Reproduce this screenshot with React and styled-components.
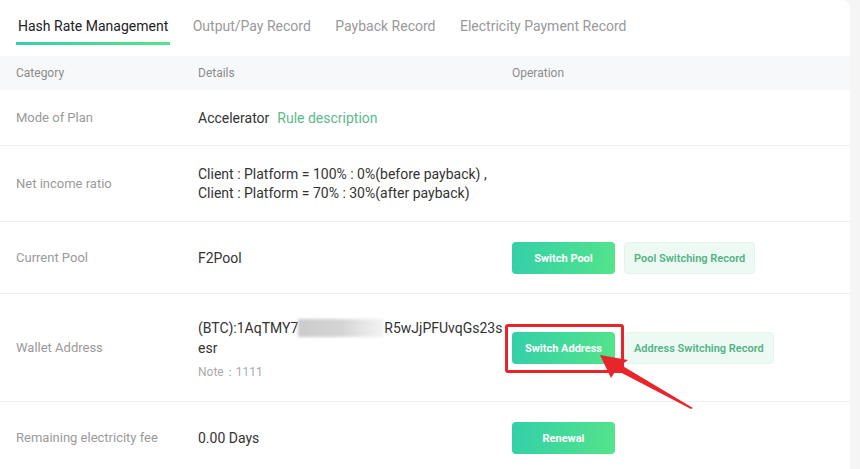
import * as React from "react"
import styled, { createGlobalStyle } from "styled-components"

const GlobalStyle = createGlobalStyle`
  html, body {
    margin: 0;
    padding: 0;
    background: #f5f5f6;
    font-family: Roboto, "Liberation Sans", Arial, sans-serif;
  }
`

const gradient = "linear-gradient(100deg, #33cfa9 0%, #54e48a 100%)"

const Page = styled.div`
  width: 860px;
  height: 469px;
  overflow: hidden;
  position: relative;
`

const Panel = styled.div`
  width: 850px;
  min-height: 469px;
  background: #fff;
  border-top-right-radius: 8px;
`

const Tabs = styled.div`
  display: flex;
  gap: 20.5px;
  padding: 15px 0 0 16px;
  height: 42px;
  box-sizing: border-box;
`

const Tab = styled.div`
  position: relative;
  padding: 0 2px;
  font-size: 14px;
  line-height: 22px;
  color: ${({ $active }) => ($active ? "#222" : "#999")};

  &::after {
    content: "";
    display: ${({ $active }) => ($active ? "block" : "none")};
    position: absolute;
    left: 0;
    right: 0;
    top: 27px;
    height: 3px;
    background: ${gradient};
  }
`

const Spacer = styled.div`
  height: 14px;
`

const Row = styled.div`
  display: grid;
  grid-template-columns: 182px 314px 1fr;
  align-items: center;
  padding: ${({ $top = 20, $bottom = 19 }) => `${$top}px 0 ${$bottom}px 16px`};
  border-bottom: 1px solid ${({ $head }) => ($head ? "transparent" : "#efefef")};
  background: ${({ $head }) => ($head ? "#f7f8fa" : "#fff")};
`

const HeadCell = styled.div`
  font-size: 12px;
  line-height: 14px;
  color: #8c8c8c;
`

const Category = styled.div`
  font-size: 13px;
  line-height: 16px;
  color: #9a9a9a;
`

const Details = styled.div`
  font-size: 14px;
  line-height: ${({ $lh }) => $lh ?? 16}px;
  color: #333;
  padding-right: 6px;
`

const Link = styled.span`
  color: #5cb98c;
  margin-left: 8px;
`

const Address = styled.div`
  margin-top: 4px;
  word-break: break-all;
  line-height: 20px;
`

const Blur = styled.span`
  display: inline-block;
  width: 86px;
  height: 18px;
  vertical-align: -4px;
  background: linear-gradient(90deg, #cbcbcb 0%, #d4d4d4 50%, #e6e6e6 75%, rgba(238,238,238,0.7) 100%);
  filter: blur(1.5px);
`

const Note = styled.div`
  margin-top: 4px;
  font-size: 12px;
  line-height: 20px;
  color: #aaa;
`

const Ops = styled.div`
  display: flex;
  gap: 9px;
  align-items: center;
`

const PrimaryButton = styled.button`
  width: 103px;
  height: 32px;
  border: none;
  border-radius: 4px;
  background: ${gradient};
  color: #fff;
  font-family: inherit;
  font-size: 11px;
  font-weight: 700;
  cursor: pointer;
`

const SecondaryButton = styled.button`
  height: 32px;
  padding: 0 9px;
  border: 1px solid #e1f6ea;
  border-radius: 4px;
  background: #ecfaf3;
  color: #55b286;
  font-family: inherit;
  font-size: 11px;
  font-weight: 600;
  cursor: pointer;
`

const Highlight = styled.div`
  position: relative;
  display: flex;

  &::before {
    content: "";
    position: absolute;
    left: -7px;
    top: -8px;
    width: 119px;
    height: 49px;
    box-sizing: border-box;
    border: 3px solid #e8252a;
    border-radius: 3px;
    pointer-events: none;
  }
`

const Arrow = styled.svg`
  position: absolute;
  left: 0;
  top: 0;
  pointer-events: none;
`

export default function App() {
  return (
    <Page>
      <GlobalStyle />
      <Panel>
        <Tabs>
          <Tab $active>Hash Rate Management</Tab>
          <Tab>Output/Pay Record</Tab>
          <Tab>Payback Record</Tab>
          <Tab>Electricity Payment Record</Tab>
        </Tabs>
        <Spacer />
        <Row $head $top={10} $bottom={9}>
          <HeadCell>Category</HeadCell>
          <HeadCell>Details</HeadCell>
          <HeadCell>Operation</HeadCell>
        </Row>
        <Row>
          <Category>Mode of Plan</Category>
          <Details>
            Accelerator<Link>Rule description</Link>
          </Details>
          <div />
        </Row>
        <Row $top={19} $bottom={18}>
          <Category>Net income ratio</Category>
          <Details $lh={19}>
            Client : Platform = 100% : 0%(before payback) ,
            <br />
            Client : Platform = 70% : 30%(after payback)
          </Details>
          <div />
        </Row>
        <Row>
          <Category>Current Pool</Category>
          <Details>F2Pool</Details>
          <Ops>
            <PrimaryButton>Switch Pool</PrimaryButton>
            <SecondaryButton>Pool Switching Record</SecondaryButton>
          </Ops>
        </Row>
        <Row>
          <Category>Wallet Address</Category>
          <Details>
            <Address>
              (BTC):1AqTMY7<Blur />R5wJjPFUvqGs23sesr
            </Address>
            <Note>Note：1111</Note>
          </Details>
          <Ops>
            <Highlight>
              <PrimaryButton>Switch Address</PrimaryButton>
            </Highlight>
            <SecondaryButton>Address Switching Record</SecondaryButton>
          </Ops>
        </Row>
        <Row>
          <Category>Remaining electricity fee</Category>
          <Details>0.00 Days</Details>
          <Ops>
            <PrimaryButton>Renewal</PrimaryButton>
          </Ops>
        </Row>
      </Panel>
      <Arrow width="860" height="469" viewBox="0 0 860 469">
        <polygon
          points="600,355 628,360 621,365 693,408 691,409 616,370 611,378"
          fill="#e8252a"
        />
      </Arrow>
    </Page>
  )
}
